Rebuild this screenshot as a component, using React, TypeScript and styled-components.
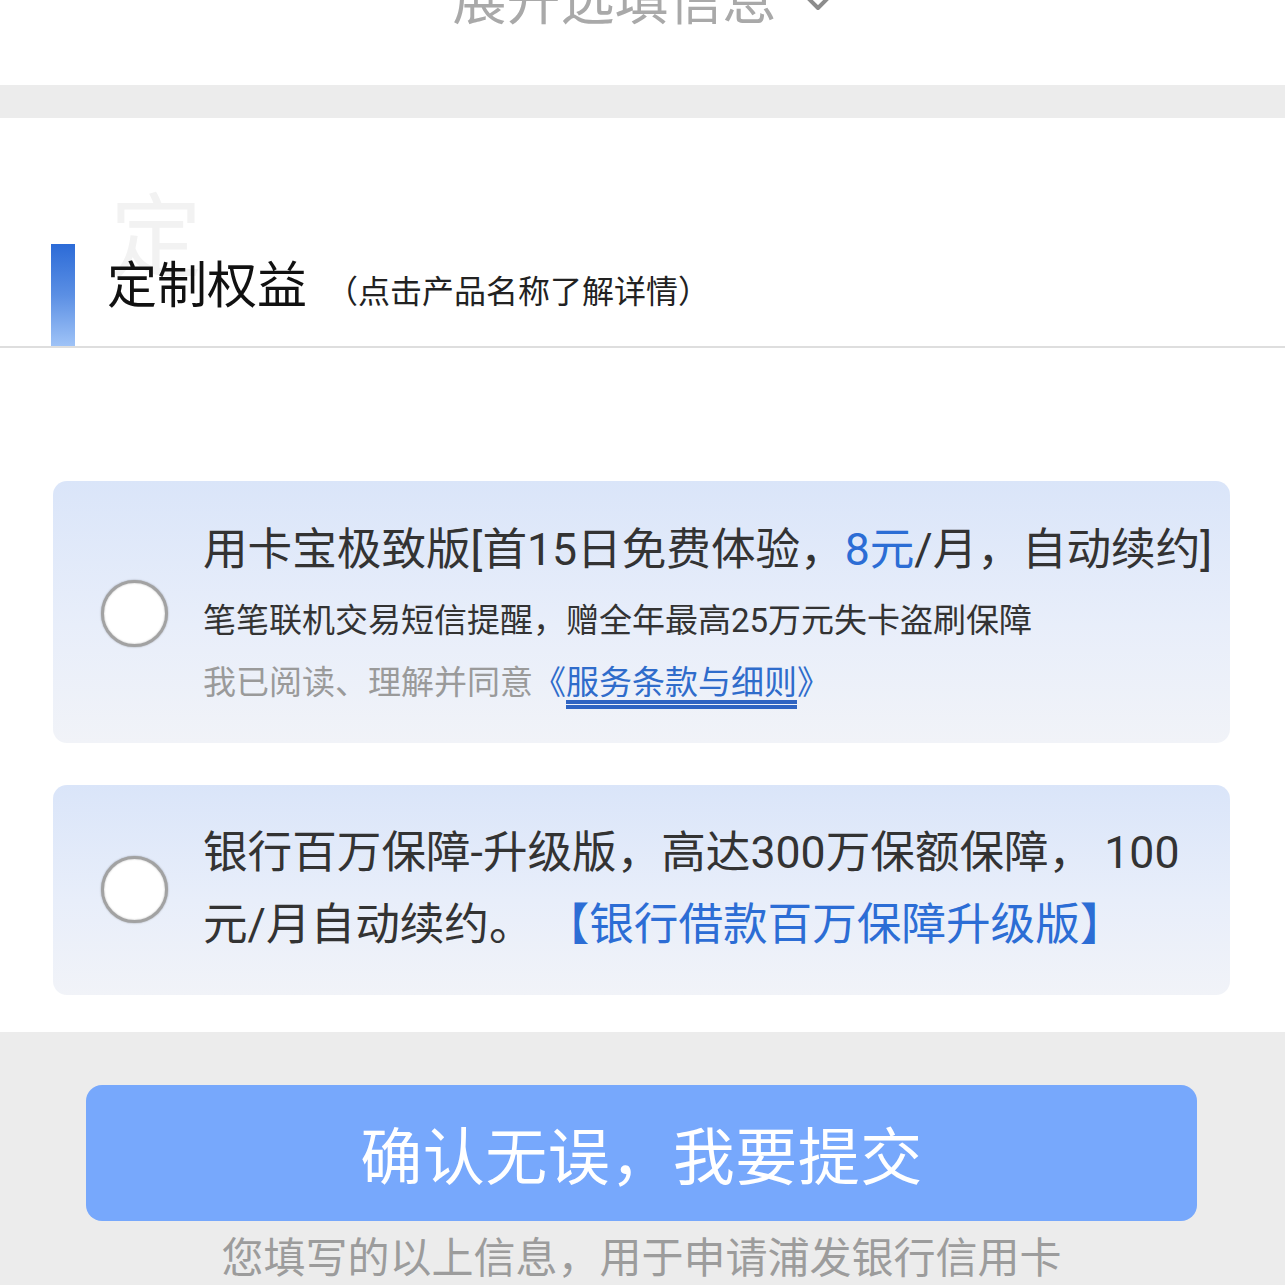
import React from "react";
import styled, { createGlobalStyle } from "styled-components";

const Global = createGlobalStyle`
  html, body {
    margin: 0;
    padding: 0;
    background: #ececec;
  }
  body {
    font-family: Roboto, "Noto Sans CJK SC", sans-serif;
    overflow: hidden;
  }
`;

const Page = styled.div`
  width: 1285px;
  display: flex;
  flex-direction: column;
`;

const TopSection = styled.div`
  height: 85px;
  background: #fff;
  overflow: hidden;
  display: flex;
  justify-content: center;
  align-items: flex-start;
`;

const ExpandRow = styled.div`
  margin-top: -25px;
  margin-left: 0px;
  display: flex;
  align-items: center;
  gap: 26px;
  font-size: 54px;
  line-height: 54px;
  color: #a9a9a9;
`;

const Chevron = styled.svg`
  width: 30px;
  height: 18px;
  margin-top: 2px;
`;

const Band = styled.div`
  height: 33px;
  background: #ececec;
`;

const Benefits = styled.section`
  background: #fff;
  padding-bottom: 37px;
`;

const Header = styled.div`
  position: relative;
  height: 228px;
  border-bottom: 2px solid #dedede;
  display: flex;
  align-items: flex-end;
  padding-left: 51px;
`;

const Watermark = styled.span`
  position: absolute;
  left: 110px;
  top: 66px;
  font-size: 92px;
  line-height: 92px;
  color: #f2f2f2;
  font-family: "Noto Sans CJK SC", sans-serif;
`;

const Bar = styled.div`
  width: 24px;
  height: 102px;
  background: linear-gradient(180deg, #2c6bd7 0%, #5b8fe4 50%, #9fc3f7 100%);
`;

const TitleRow = styled.div`
  position: relative;
  display: flex;
  align-items: baseline;
  gap: 19px;
  margin-left: 32px;
  margin-bottom: 34px;
`;

const Title = styled.h2`
  margin: 0;
  font-weight: 400;
  font-size: 50px;
  line-height: 50px;
  color: #111;
  font-family: "Noto Sans CJK SC", sans-serif;
`;

const SubTitle = styled.span`
  font-size: 32px;
  color: #222;
  font-family: "Noto Sans CJK SC", sans-serif;
`;

const CardList = styled.div`
  margin: 133px 55px 0 53px;
  display: flex;
  flex-direction: column;
  gap: 42px;
`;

const Card = styled.div<{ $pt: number; $pb: number }>`
  display: flex;
  align-items: center;
  gap: 35px;
  padding: ${(p) => p.$pt}px 0 ${(p) => p.$pb}px 48px;
  border-radius: 14px;
  background: linear-gradient(180deg, #dae5f9 0%, #e8eefa 55%, #f1f3f8 100%);
`;

const Radio = styled.div`
  flex: none;
  width: 61px;
  height: 61px;
  border-radius: 50%;
  background: #fff;
  border: 3px solid #a2a2a2;
  box-shadow: 0 0 2px rgba(0, 0, 0, 0.35), inset 0 0 2px rgba(0, 0, 0, 0.25);
`;

const Content = styled.div`
  display: flex;
  flex-direction: column;
  color: #333;
`;

const MainLine = styled.div<{ $lh: number }>`
  font-size: 44.6px;
  line-height: ${(p) => p.$lh}px;
  white-space: nowrap;
  color: #333;
`;

const SubLine = styled.div<{ $mt: number; $gray?: boolean }>`
  margin-top: ${(p) => p.$mt}px;
  font-size: 33px;
  line-height: 46px;
  white-space: nowrap;
  color: ${(p) => (p.$gray ? "#9a9a9a" : "#333")};
`;

const Blue = styled.span`
  color: #2c6dd5;
`;

const Link = styled.span`
  color: #2f6ccb;
`;

const Underlined = styled.span`
  text-decoration-line: underline;
  text-decoration-style: double;
  text-decoration-thickness: 4px;
  text-underline-offset: 6px;
  text-decoration-color: #2f64c2;
`;

const Footer = styled.div`
  background: #ececec;
  padding: 53px 88px 20px 86px;
  display: flex;
  flex-direction: column;
  align-items: center;
`;

const SubmitButton = styled.button`
  width: 1111px;
  height: 136px;
  border: none;
  border-radius: 16px;
  background: #77a8fc;
  color: #fff;
  font-size: 62px;
  font-family: "Noto Sans CJK SC", sans-serif;
  letter-spacing: 0.5px;
  cursor: pointer;
`;

const Notice = styled.p`
  margin: 13px 0 0;
  font-size: 42px;
  line-height: 42px;
  color: #9c9c9c;
  font-family: "Noto Sans CJK SC", sans-serif;
`;

export default function App() {
  return (
    <>
      <Global />
      <Page>
        <TopSection>
          <ExpandRow>
            <span>展开选填信息</span>
            <Chevron viewBox="0 0 30 18">
              <polyline
                points="3,2 15,14 27,2"
                fill="none"
                stroke="#8c8c8c"
                strokeWidth="4"
                strokeLinecap="round"
                strokeLinejoin="round"
              />
            </Chevron>
          </ExpandRow>
        </TopSection>
        <Band />
        <Benefits>
          <Header>
            <Watermark>定</Watermark>
            <Bar />
            <TitleRow>
              <Title>定制权益</Title>
              <SubTitle>（点击产品名称了解详情）</SubTitle>
            </TitleRow>
          </Header>
          <CardList>
            <Card $pt={39} $pb={37}>
              <Radio />
              <Content>
                <MainLine $lh={60}>
                  用卡宝极致版[首15日免费体验，<Blue>8元</Blue>/月，自动续约]
                </MainLine>
                <SubLine $mt={18}>
                  笔笔联机交易短信提醒，赠全年最高25万元失卡盗刷保障
                </SubLine>
                <SubLine $mt={16} $gray>
                  我已阅读、理解并同意
                  <Link>
                    《<Underlined>服务条款与细则</Underlined>》
                  </Link>
                </SubLine>
              </Content>
            </Card>
            <Card $pt={32} $pb={34}>
              <Radio />
              <Content>
                <MainLine $lh={72}>
                  银行百万保障-升级版，高达300万保额保障， 100
                </MainLine>
                <MainLine $lh={72}>
                  元/月自动续约。 <Blue>【银行借款百万保障升级版】</Blue>
                </MainLine>
              </Content>
            </Card>
          </CardList>
        </Benefits>
        <Footer>
          <SubmitButton>确认无误，我要提交</SubmitButton>
          <Notice>您填写的以上信息，用于申请浦发银行信用卡</Notice>
        </Footer>
      </Page>
    </>
  );
}
